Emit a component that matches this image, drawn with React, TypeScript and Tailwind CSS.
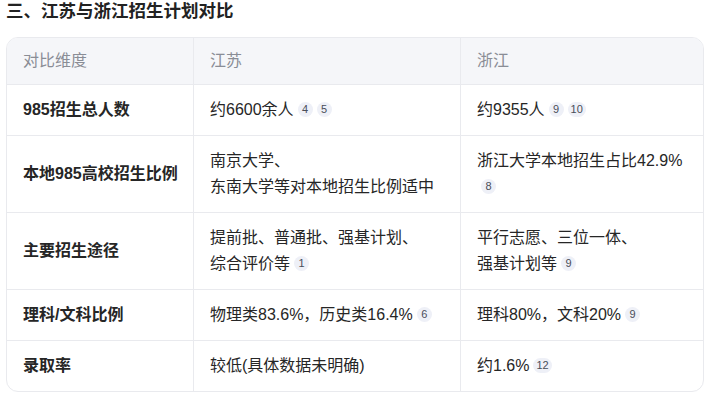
import type { ReactNode } from 'react';

type Row = {
  label: string;
  js: ReactNode;
  zj: ReactNode;
};

function Cite({ n }: { n: string }) {
  return (
    <span className="ml-1 inline-flex h-[15px] min-w-[15px] translate-y-[-1px] items-center justify-center rounded-full bg-[#eef0f7] px-[3px] align-middle text-[11px] leading-none text-[#4a4e59]">
      {n}
    </span>
  );
}

const rows: Row[] = [
  {
    label: '985招生总人数',
    js: (
      <>
        约6600余人
        <Cite n="4" />
        <Cite n="5" />
      </>
    ),
    zj: (
      <>
        约9355人
        <Cite n="9" />
        <Cite n="10" />
      </>
    ),
  },
  {
    label: '本地985高校招生比例',
    js: (
      <>
        南京大学、
        <br />
        东南大学等对本地招生比例适中
      </>
    ),
    zj: (
      <>
        浙江大学本地招生占比42.9%
        <br />
        <Cite n="8" />
      </>
    ),
  },
  {
    label: '主要招生途径',
    js: (
      <>
        提前批、普通批、强基计划、
        <br />
        综合评价等
        <Cite n="1" />
      </>
    ),
    zj: (
      <>
        平行志愿、三位一体、
        <br />
        强基计划等
        <Cite n="9" />
      </>
    ),
  },
  {
    label: '理科/文科比例',
    js: (
      <>
        物理类83.6%，历史类16.4%
        <Cite n="6" />
      </>
    ),
    zj: (
      <>
        理科80%，文科20%
        <Cite n="9" />
      </>
    ),
  },
  {
    label: '录取率',
    js: <>较低(具体数据未明确)</>,
    zj: (
      <>
        约1.6%
        <Cite n="12" />
      </>
    ),
  },
];

export default function App() {
  return (
    <div
      className="h-[397px] w-[710px] overflow-hidden bg-white px-[6px] text-[#1f1f1f]"
      style={{ fontFamily: '"Liberation Sans", "Noto Sans CJK SC", sans-serif' }}
    >
      <h3 className="pt-[2px] text-[17.5px] font-bold leading-[18px] text-[#222]">三、江苏与浙江招生计划对比</h3>

      <div className="mt-[17px] overflow-hidden rounded-[12px] border border-[#e9eaee]">
        <div className="grid grid-cols-[186px_267px_1fr] bg-[#f5f6f9] text-[16px] leading-[26px] text-[#8a8d96]">
          <div className="px-4 py-[10px]">对比维度</div>
          <div className="border-l border-[#e9eaee] px-4 py-[10px]">江苏</div>
          <div className="border-l border-[#e9eaee] px-4 py-[10px]">浙江</div>
        </div>
        {rows.map((r) => (
          <div
            key={r.label}
            className="grid grid-cols-[186px_267px_1fr] border-t border-[#e9eaee] text-[16px] leading-[26px] text-[#262626]"
          >
            <div className="flex items-center whitespace-nowrap pl-4 py-3 font-bold">{r.label}</div>
            <div className="border-l border-[#e9eaee] px-4 py-3">{r.js}</div>
            <div className="border-l border-[#e9eaee] px-4 py-3">{r.zj}</div>
          </div>
        ))}
      </div>
    </div>
  );
}
